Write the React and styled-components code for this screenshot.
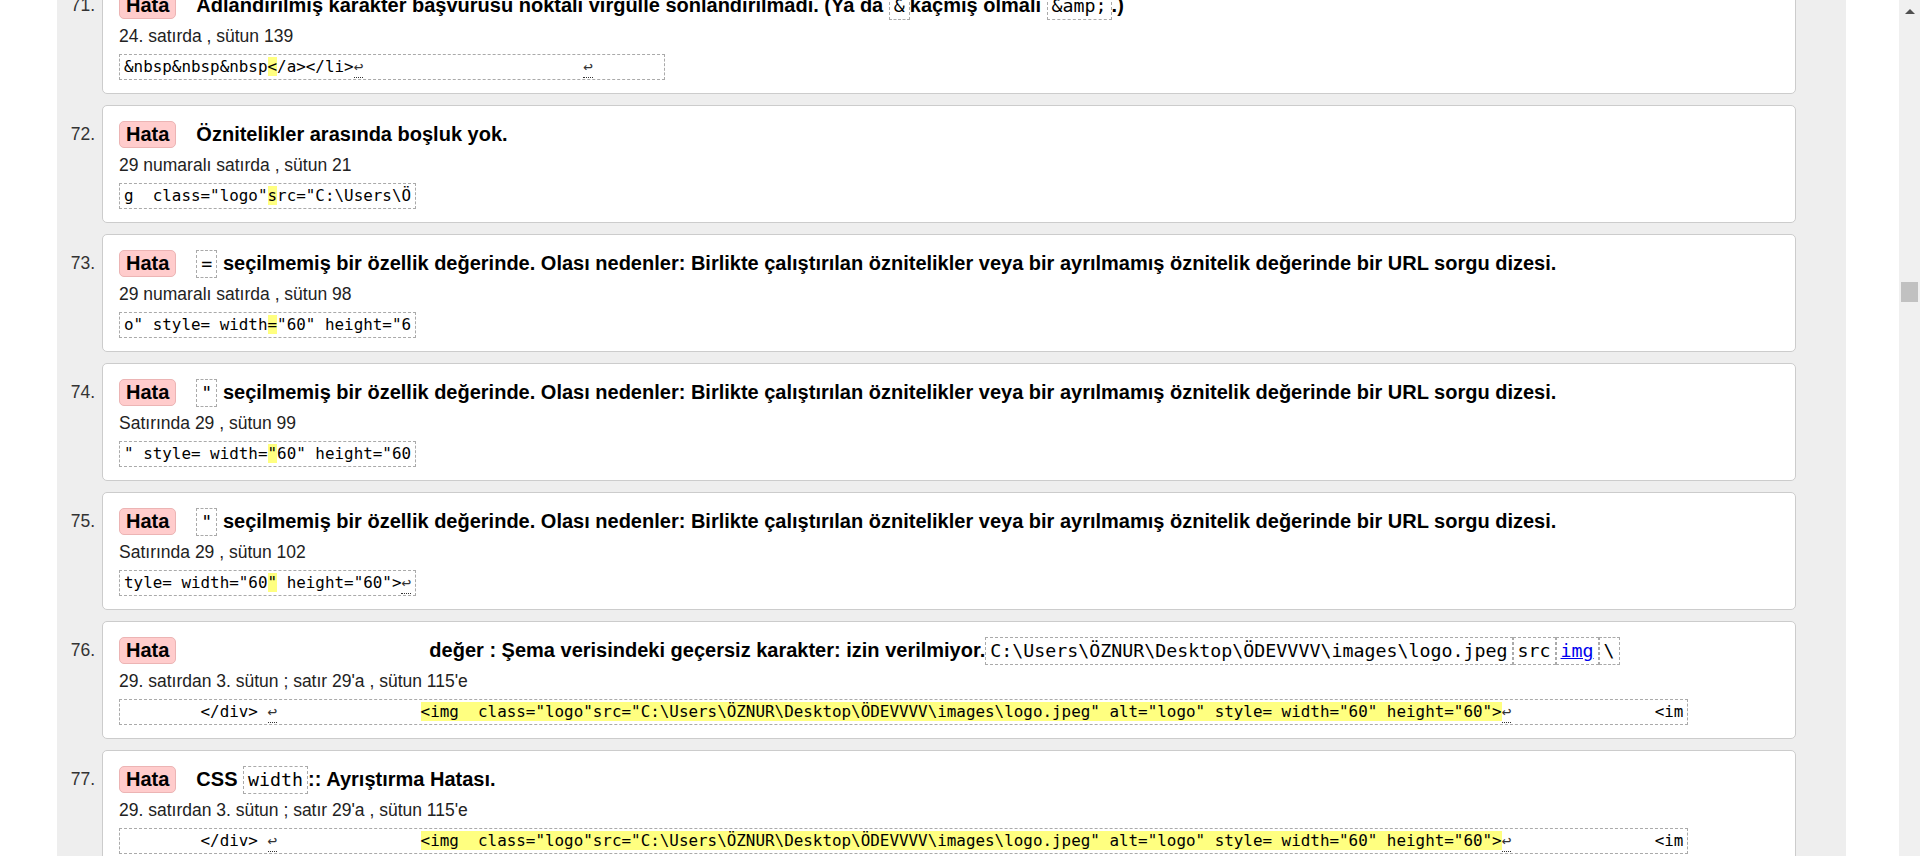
import React from 'react';
import styled, { createGlobalStyle } from 'styled-components';

const GlobalStyle = createGlobalStyle`
  html, body {
    margin: 0;
    padding: 0;
    height: 100%;
    overflow: hidden;
    background: #fff;
  }
  body {
    font-family: "Liberation Sans", Arial, sans-serif;
  }
`;

const Page = styled.div`
  display: flex;
  height: 856px;
  overflow: hidden;
`;

const Viewport = styled.div`
  flex: 1;
  min-width: 0;
  padding: 0 53px 0 57px;
  overflow: hidden;
`;

const Panel = styled.div`
  height: 100%;
  background: #eee;
  padding-right: 50px;
  overflow: hidden;
`;

const List = styled.ol`
  list-style: none;
  margin: -24px 0 0;
  padding: 0;
`;

const Item = styled.li`
  display: grid;
  grid-template-columns: 45px 1fr;
  margin-bottom: 11px;
`;

const Num = styled.span`
  padding: 15px 7px 0 0;
  text-align: right;
  font-size: 17.5px;
  line-height: 29px;
  color: #333;
`;

const Card = styled.div`
  background: #fff;
  border: 1px solid #ccc;
  border-radius: 5px;
  padding: 14px 16px 13px;
  min-width: 0;
`;

const Title = styled.div`
  display: flex;
  align-items: center;
  height: 29px;
  white-space: nowrap;
`;

const Badge = styled.span`
  flex: none;
  margin-right: 20px;
  padding: 0 6px;
  font-size: 20px;
  font-weight: bold;
  line-height: 25px;
  color: #000;
  background: #fcc;
  border: 1px solid #ecb4b4;
  border-radius: 5px;
`;

const Message = styled.span`
  padding-left: ${({ $indent }) => $indent || 0}px;
  font-size: 20px;
  font-weight: bold;
  line-height: 29px;
  color: #000;
`;

const InlineCode = styled.code`
  display: inline-block;
  padding: 0 4px;
  font-family: "DejaVu Sans Mono", "Liberation Mono", monospace;
  font-size: 18.3px;
  font-weight: normal;
  line-height: 26px;
  vertical-align: middle;
  border: 1px dashed #aaa;
`;

const CodeLink = styled.a`
  color: #00e;
  text-decoration: underline;
`;

const Meta = styled.p`
  margin: 5px 0 0;
  font-size: 17.5px;
  line-height: 23px;
  color: #222;
`;

const Extract = styled.code`
  display: block;
  width: max-content;
  margin-top: 6px;
  padding: 0 4px;
  font-family: "DejaVu Sans Mono", "Liberation Mono", monospace;
  font-size: 15.9px;
  line-height: 24px;
  color: #000;
  white-space: pre;
  border: 1px dashed #aaa;
`;

const Mark = styled.span`
  background: #ffff80;
`;

const Ret = styled.span`
  display: inline-block;
  width: 1ch;
  line-height: 20px;
  color: #333;
  border-bottom: 1px dotted #333;
`;

const Scrollbar = styled.div`
  flex: none;
  display: flex;
  flex-direction: column;
  align-items: center;
  width: 21px;
  background: #f0f0f0;
`;

const ArrowUp = styled.div`
  width: 0;
  height: 0;
  margin-top: 9px;
  border-left: 5px solid transparent;
  border-right: 5px solid transparent;
  border-bottom: 5px solid #505050;
`;

const Thumb = styled.div`
  width: 17px;
  height: 20px;
  margin-top: 268px;
  background: #c1c1c1;
`;

const sp = (n) => ' '.repeat(n);

const imgTag = '<img  class="logo"src="C:\\Users\\ÖZNUR\\Desktop\\ÖDEVVVV\\images\\logo.jpeg" alt="logo" style= width="60" height="60">';

const divExtract = [
  sp(8) + '</div> ',
  { ret: true },
  sp(15),
  { hl: imgTag },
  { ret: true },
  sp(15) + '<im',
];

const attrText = ' seçilmemiş bir özellik değerinde. Olası nedenler: Birlikte çalıştırılan öznitelikler veya bir ayrılmamış öznitelik değerinde bir URL sorgu dizesi.';

const messages = [
  {
    num: 71,
    title: [
      'Adlandırılmış karakter başvurusu noktalı virgülle sonlandırılmadı. (Ya da ',
      { code: '&' },
      'kaçmış olmalı ',
      { code: '&amp;' },
      '.)',
    ],
    meta: '24. satırda , sütun 139',
    extract: ['&nbsp&nbsp&nbsp', { hl: '<' }, '/a></li>', { ret: true }, sp(23), { ret: true }, sp(7)],
  },
  {
    num: 72,
    title: ['Öznitelikler arasında boşluk yok.'],
    meta: '29 numaralı satırda , sütun 21',
    extract: ['g  class="logo"', { hl: 's' }, 'rc="C:\\Users\\Ö'],
  },
  {
    num: 73,
    title: [{ code: '=' }, attrText],
    meta: '29 numaralı satırda , sütun 98',
    extract: ['o" style= width', { hl: '=' }, '"60" height="6'],
  },
  {
    num: 74,
    title: [{ code: '"' }, attrText],
    meta: 'Satırında 29 , sütun 99',
    extract: ['" style= width=', { hl: '"' }, '60" height="60'],
  },
  {
    num: 75,
    title: [{ code: '"' }, attrText],
    meta: 'Satırında 29 , sütun 102',
    extract: ['tyle= width="60', { hl: '"' }, ' height="60">', { ret: true }],
  },
  {
    num: 76,
    indent: 233,
    title: [
      'değer : Şema verisindeki geçersiz karakter: izin verilmiyor.',
      { code: 'C:\\Users\\ÖZNUR\\Desktop\\ÖDEVVVV\\images\\logo.jpeg' },
      { code: 'src' },
      { code: 'img', link: true },
      { code: '\\' },
    ],
    meta: "29. satırdan 3. sütun ; satır 29'a , sütun 115'e",
    extract: divExtract,
  },
  {
    num: 77,
    title: ['CSS ', { code: 'width' }, ':: Ayrıştırma Hatası.'],
    meta: "29. satırdan 3. sütun ; satır 29'a , sütun 115'e",
    extract: divExtract,
  },
];

const renderTitlePart = (part, i) => {
  if (typeof part === 'string') return <React.Fragment key={i}>{part}</React.Fragment>;
  return (
    <InlineCode key={i}>
      {part.link ? <CodeLink href="#">{part.code}</CodeLink> : part.code}
    </InlineCode>
  );
};

const renderExtractPart = (part, i) => {
  if (typeof part === 'string') return <React.Fragment key={i}>{part}</React.Fragment>;
  if (part.ret) return <Ret key={i}>↩</Ret>;
  return <Mark key={i}>{part.hl}</Mark>;
};

const App = () => (
  <Page>
    <GlobalStyle />
    <Viewport>
      <Panel>
        <List>
          {messages.map((m) => (
            <Item key={m.num}>
              <Num>{m.num}.</Num>
              <Card>
                <Title>
                  <Badge>Hata</Badge>
                  <Message $indent={m.indent}>{m.title.map(renderTitlePart)}</Message>
                </Title>
                <Meta>{m.meta}</Meta>
                <Extract>{m.extract.map(renderExtractPart)}</Extract>
              </Card>
            </Item>
          ))}
        </List>
      </Panel>
    </Viewport>
    <Scrollbar>
      <ArrowUp />
      <Thumb />
    </Scrollbar>
  </Page>
);

export default App;
